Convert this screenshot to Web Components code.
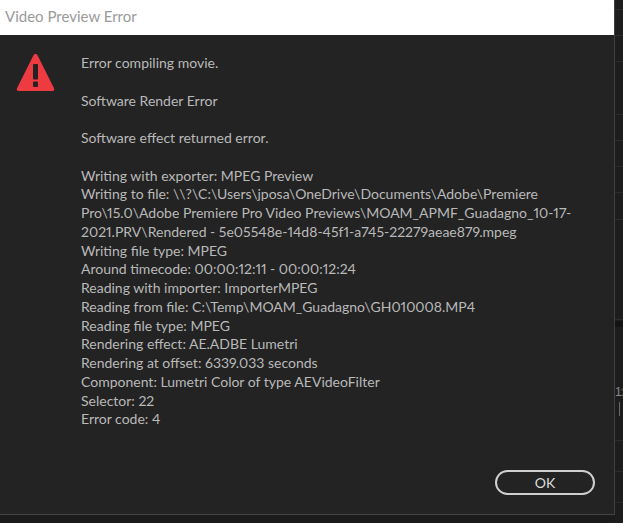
<!DOCTYPE html>
<html>
<head>
<meta charset="utf-8">
<style>
    html, body { margin: 0; height: 100%; background: #1b1b1b; overflow: hidden; }
    body { display: flex; align-items: flex-start; }
</style>
</head>
<body>
<error-dialog heading="Video Preview Error">
    <div>Error compiling movie.</div>
    <div class="gap">Software Render Error</div>
    <div class="gap">Software effect returned error.</div>
    <div class="gap">Writing with exporter: MPEG Preview</div>
    <div>Writing to file: \\?\C:\Users\jposa\OneDrive\Documents\Adobe\Premiere</div>
    <div>Pro\15.0\Adobe Premiere Pro Video Previews\MOAM_APMF_Guadagno_10-17-</div>
    <div>2021.PRV\Rendered - 5e05548e-14d8-45f1-a745-22279aeae879.mpeg</div>
    <div>Writing file type: MPEG</div>
    <div>Around timecode: 00:00:12:11 - 00:00:12:24</div>
    <div>Reading with importer: ImporterMPEG</div>
    <div>Reading from file: C:\Temp\MOAM_Guadagno\GH010008.MP4</div>
    <div>Reading file type: MPEG</div>
    <div>Rendering effect: AE.ADBE Lumetri</div>
    <div>Rendering at offset: 6339.033 seconds</div>
    <div>Component: Lumetri Color of type AEVideoFilter</div>
    <div>Selector: 22</div>
    <div>Error code: 4</div>
</error-dialog>
<panel-strip></panel-strip>
<script>
class WarningIcon extends HTMLElement {
    constructor() {
        super();
        this.attachShadow({ mode: 'open' });
        this.shadowRoot.innerHTML = `
        <style>
            :host { display: block; width: 39px; height: 38px; flex: none; }
            svg { display: block; }
        </style>
        <svg width="39" height="38" viewBox="0 0 39 38">
            <path fill="#ee3b41" d="M19.500 0c.9 0 1.600.5 2 1.300l16.500 33c.7 1.400-.2 2.700-1.700 2.700H2.700C1.200 37 .3 35.700 1 34.300l16.500-33c.4-.8 1.100-1.300 2-1.300z"/>
            <rect x="17" y="10" width="5" height="15.500" rx="1" fill="#232323"/>
            <rect x="17" y="27.500" width="5" height="5.500" rx="1" fill="#232323"/>
        </svg>
        `;
    }
}

class PillButton extends HTMLElement {
    constructor() {
        super();
        this.attachShadow({ mode: 'open' });
        this.shadowRoot.innerHTML = `
        <style>
            :host {
                display: flex;
                align-items: center;
                justify-content: center;
                box-sizing: border-box;
                width: 100px;
                height: 25px;
                border: 2px solid #cfcfcf;
                border-radius: 13px;
                color: #dcdcdc;
                font: 14px Lato, "Liberation Sans", sans-serif;
            }
        </style>
        <slot></slot>
        `;
    }
}

class ErrorDialog extends HTMLElement {
    constructor() {
        super();
        this.attachShadow({ mode: 'open' });
        this.shadowRoot.innerHTML = `
        <style>
            :host {
                display: flex;
                flex-direction: column;
                flex: none;
                box-sizing: border-box;
                width: 615px;
                height: 515px;
                background: #232323;
                border-right: 1px solid #3f3f3f;
                border-bottom: 1px solid #444;
                font: 14px/18.75px Lato, "Liberation Sans", sans-serif;
                font-variant-numeric: proportional-nums;
                color: #b9b9b9;
            }
            .title {
                height: 35px;
                flex: none;
                box-sizing: border-box;
                padding: 6px 5px 0;
                background: #fff;
                color: #9a9a9a;
                font-size: 15px;
                line-height: 20px;
            }
            .main {
                flex: 1;
                display: flex;
                gap: 26.500px;
                padding: 19px 0 0 15.500px;
            }
            .text { width: 500px; }
            ::slotted(.gap) { margin-top: 18.750px; }
            .foot {
                display: flex;
                justify-content: flex-end;
                padding: 0 19px 19px 0;
            }
        </style>
        <div class="title"></div>
        <div class="main">
            <warning-icon></warning-icon>
            <div class="text"><slot></slot></div>
        </div>
        <div class="foot"><pill-button>OK</pill-button></div>
        `;
        this.shadowRoot.querySelector('.title').textContent = this.getAttribute('heading');
    }
}

// sliver of the Premiere panels showing to the right of the dialog
class PanelStrip extends HTMLElement {
    constructor() {
        super();
        this.attachShadow({ mode: 'open' });
        const rows = [10, 26, 26, 53, 26, 26, 26, 27, 100, 121, 31, 31];
        this.shadowRoot.innerHTML = `
        <style>
            :host {
                display: block;
                position: relative;
                flex: 1;
                height: 100%;
                overflow: hidden;
                background: #1d1d1d;
                --rule: #2b2b2b;
            }
            div { border-bottom: 1px solid var(--rule); box-sizing: border-box; }
            .band { position: absolute; left: 0; right: 0; top: 321px; height: 6px; background: #141414; border: 0; }
            .time {
                position: absolute; left: 0; top: 385px; border: 0;
                font: 12px "Liberation Sans", sans-serif; letter-spacing: -1px; color: #8c8c8c; white-space: nowrap;
            }
            .tick { position: absolute; left: 4px; top: 402px; width: 1px; height: 14px; background: #6a6a6a; border: 0; }
        </style>
        ${rows.map(h => `<div style="height:${h}px"></div>`).join('')}
        <div class="band"></div>
        <div class="time">1:</div>
        <div class="tick"></div>
        `;
    }
}

customElements.define('warning-icon', WarningIcon);
customElements.define('pill-button', PillButton);
customElements.define('error-dialog', ErrorDialog);
customElements.define('panel-strip', PanelStrip);
</script>
</body>
</html>
